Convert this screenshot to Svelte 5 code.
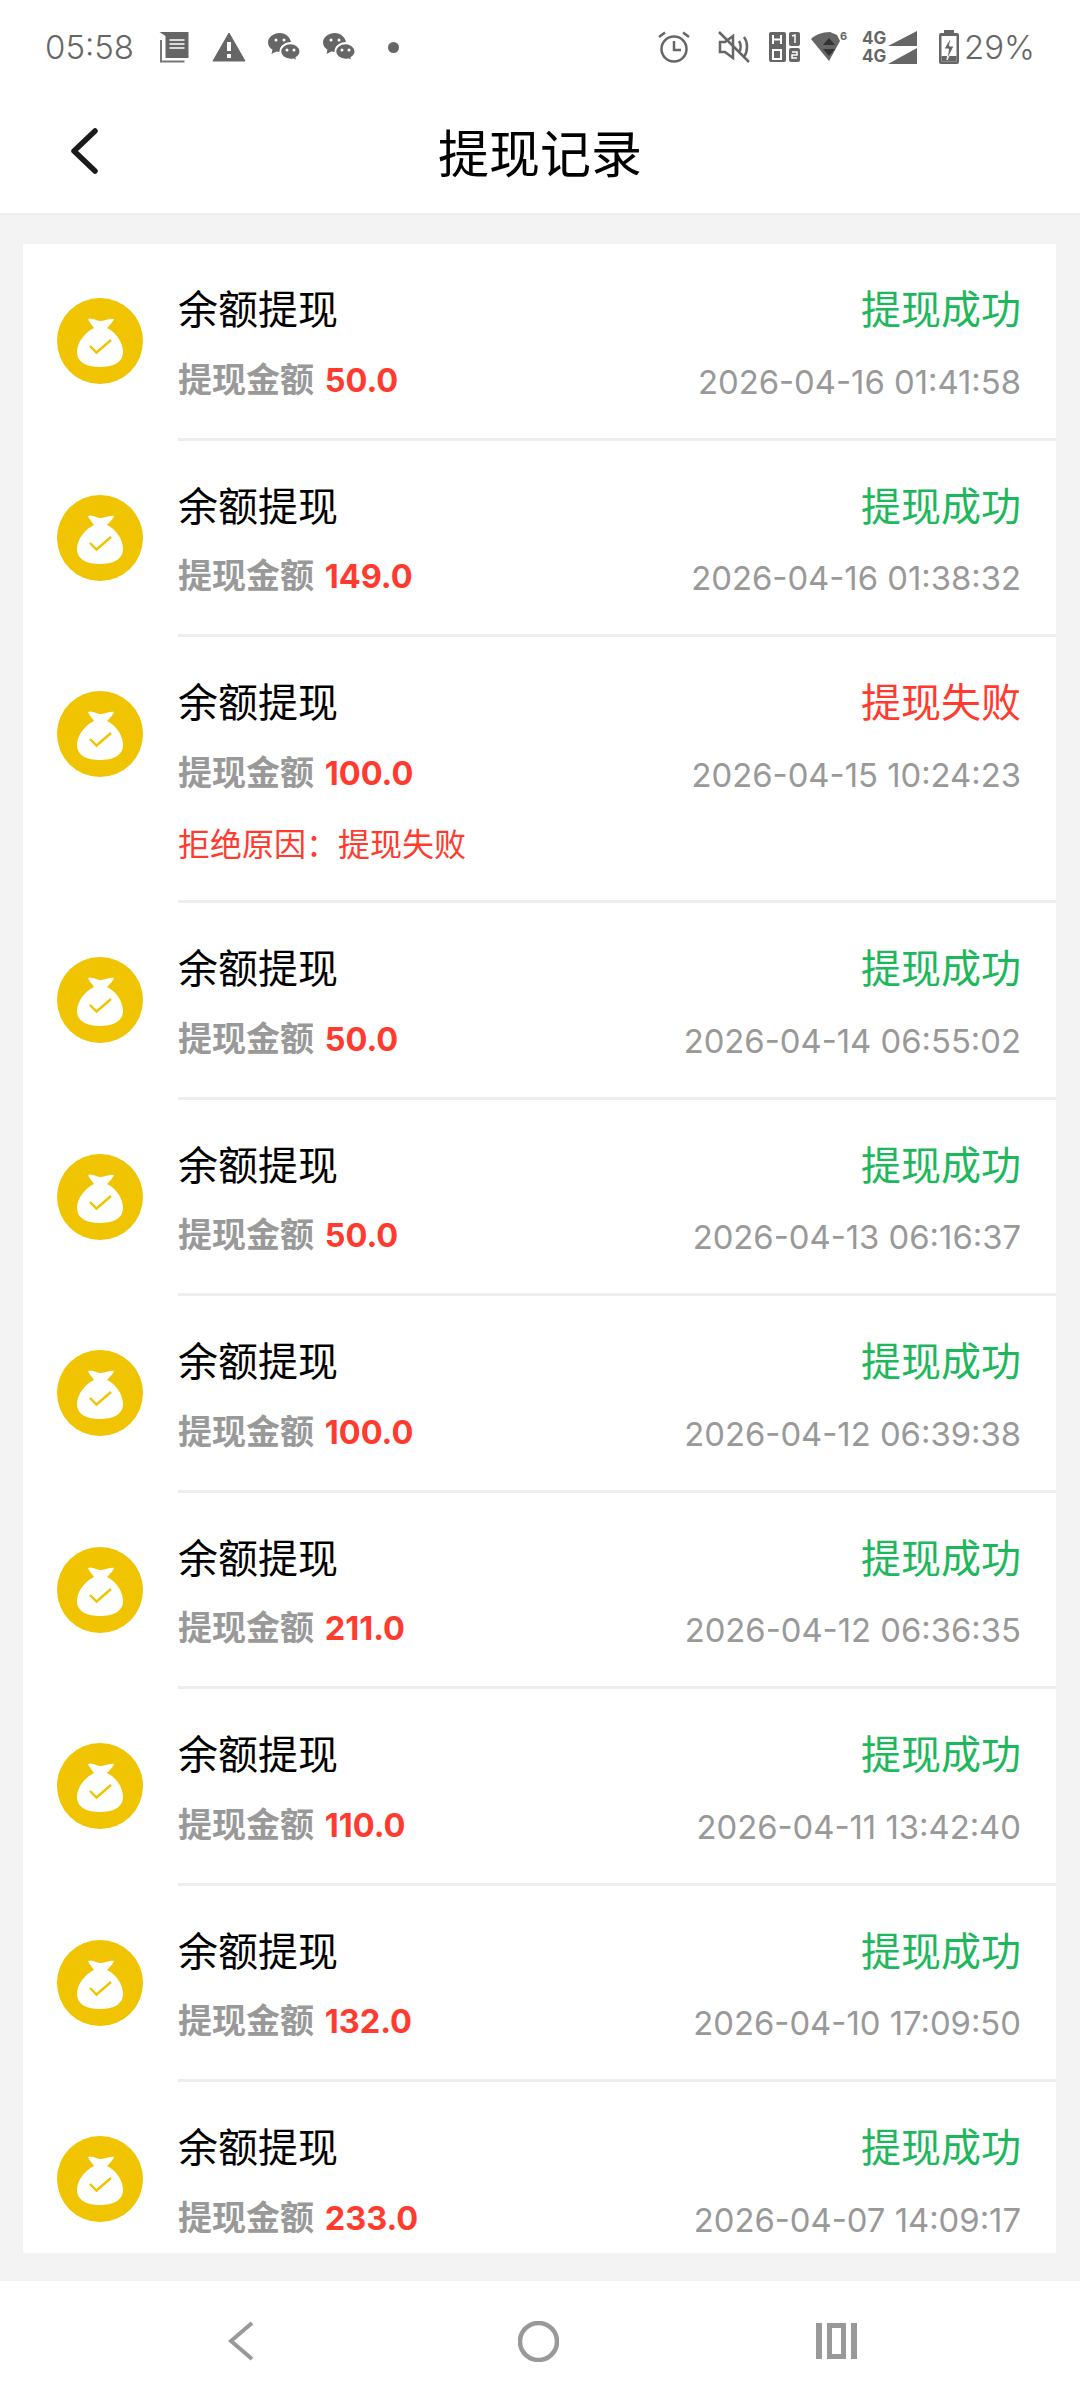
<script>
  const records = [
    { amount: '50.0', time: '2026-04-16 01:41:58' },
    { amount: '149.0', time: '2026-04-16 01:38:32' },
    { amount: '100.0', time: '2026-04-15 10:24:23', failed: true, reason: '拒绝原因：提现失败' },
    { amount: '50.0', time: '2026-04-14 06:55:02' },
    { amount: '50.0', time: '2026-04-13 06:16:37' },
    { amount: '100.0', time: '2026-04-12 06:39:38' },
    { amount: '211.0', time: '2026-04-12 06:36:35' },
    { amount: '110.0', time: '2026-04-11 13:42:40' },
    { amount: '132.0', time: '2026-04-10 17:09:50' },
    { amount: '233.0', time: '2026-04-07 14:09:17' }
  ];
</script>

{#snippet wechat()}
  <svg class="ic" width="34" height="32" viewBox="0 0 34 32">
    <path d="M13 2C6.500 2 1 6.300 1 11.500c0 3 1.800 5.600 4.500 7.300L4.500 23l5-2.500c1 .3 2 .4 3 .4 0-5.500 5-9.900 11.500-9.900C23 6 18.500 2 13 2z" fill="#666" />
    <path d="M23.500 12.500C18 12.500 13.500 16 13.500 20.500s4.500 8 10 8c1 0 2-.1 3-.4l3.500 2-.8-3.500c2.500-1.500 4-3.700 4-6.100 0-4.500-4.500-8-9.700-8z" fill="#666" stroke="#fff" stroke-width="1.500" />
    <circle cx="9" cy="9" r="1.500" fill="#fff" /><circle cx="17" cy="9" r="1.500" fill="#fff" />
    <circle cx="20" cy="19" r="1.500" fill="#fff" /><circle cx="27" cy="19" r="1.500" fill="#fff" />
  </svg>
{/snippet}

{#snippet bag()}
  <svg class="bag" width="86" height="86" viewBox="0 0 86 86">
    <circle cx="43" cy="43" r="43" fill="#f0c400" />
    <path d="M31 21C35 19 39 23 44 23C49 23 53 20 57 21C56 24 52 28 50 30C60 35 66 45 66 54C66 65 55 69 43 69C31 69 20 65 20 54C20 45 27 35 37 30C35 27 32 24 31 21Z" fill="#fff" />
    <path d="M33 48L39.500 54.500L54 42" fill="none" stroke="#f0c400" stroke-width="2.400" />
  </svg>
{/snippet}

<div class="page">
  <div class="status">
    <div class="status-left">
      <span class="clock">05:58</span>
      <svg class="ic" width="31" height="32" viewBox="0 0 30 32">
        <path d="M0 1H29V27H6V5z" fill="#666" />
        <path d="M10 9H25M10 13H25M10 17H25" stroke="#fff" stroke-width="1.500" />
        <path d="M1.500 9V30.500H25" fill="none" stroke="#777" stroke-width="2" />
      </svg>
      <svg class="warn" width="34" height="30" viewBox="0 0 33 30">
        <path d="M16.500 1L32.500 29H.5z" fill="#666" stroke="#666" stroke-linejoin="round" />
        <path d="M14.500 10H18.500V19H14.500zM14.500 22H18.500V26H14.500z" fill="#fff" />
      </svg>
      {@render wechat()}
      {@render wechat()}
      <span class="dot"></span>
    </div>
    <div class="status-right">
      <svg width="32" height="32" viewBox="0 0 32 32" fill="none" stroke="#666" stroke-width="2.500">
        <circle cx="16" cy="18" r="12.500" />
        <path d="M16 10V19H23M1 6L7 1.500M31 6L25 1.500" />
      </svg>
      <svg class="mute" width="33" height="32" viewBox="0 0 33 32" fill="none" stroke="#666" stroke-width="2.500">
        <path d="M2 11H7L15 5V27L7 21H2z" />
        <path d="M1 1L31 31M21 10C23 13 23 18 21 22M26 6C30 11 30 20 26 26" />
      </svg>
      <svg class="hd" width="31" height="32" viewBox="0 0 31 32">
        <rect x="0" y="1" width="17" height="30" rx="2" fill="#666" />
        <rect x="20" y="1" width="11" height="14" rx="2" fill="#666" />
        <rect x="20" y="17" width="11" height="14" rx="2" fill="#666" />
        <path d="M4 4V13M12 4V13M4 8.500H12M4 19H12V28H4z" fill="none" stroke="#fff" stroke-width="2" />
        <path d="M23 5L26 4V12M23 21H28V24H23V27H28" fill="none" stroke="#fff" stroke-width="1.500" />
      </svg>
      <svg class="wifi" width="37" height="40" viewBox="0 -8 37 40">
        <path d="M0 8C4 4 11 1 19 1L26 4L29 10L18 30z" fill="#666" />
        <path d="M12 14L18 7L24 14zM12 18H24L18 25z" fill="#333" />
        <text x="29" y="9" class="six">6</text>
      </svg>
      <div class="sim">
        <div class="sim-row"><span>4G</span><svg width="30" height="16" viewBox="0 0 30 16"><path d="M0 15L29 0V15z" fill="#666" /></svg></div>
        <div class="sim-row"><span>4G</span><svg width="30" height="17" viewBox="0 0 30 17"><path d="M0 16L29 0V16z" fill="#666" /></svg></div>
      </div>
      <svg class="batt" width="20" height="34" viewBox="0 0 20 34">
        <path d="M5 0H15V3H18Q20 3 20 5V32Q20 34 18 34H2Q0 34 0 32V5Q0 3 2 3H5z" fill="#666" />
        <rect x="2.500" y="6" width="15" height="25.500" fill="#fff" />
        <rect x="2.500" y="26" width="15" height="5.500" fill="#666" />
        <path d="M12 7L5 19H9.500L8 30L15 16H10.500z" fill="#666" stroke="#fff" />
      </svg>
      <span class="pct">29%</span>
    </div>
  </div>

  <header>
    <svg class="back" width="28" height="48" viewBox="0 0 28 48">
      <path d="M25 4L4 24L25 44" fill="none" stroke="#1a1a1a" stroke-width="5.500" stroke-linecap="round" stroke-linejoin="round" />
    </svg>
    <h1>提现记录</h1>
  </header>

  <main>
    <div class="card">
      {#each records as r}
        <div class="row">
          {@render bag()}
          <div class="body">
            <div class="line one">
              <span class="title">余额提现</span>
              <span class="state" class:failed={r.failed}>{r.failed ? '提现失败' : '提现成功'}</span>
            </div>
            <div class="line two">
              <span class="label">提现金额 <b>{r.amount}</b></span>
              <span class="time">{r.time}</span>
            </div>
            {#if r.reason}
              <div class="reason">{r.reason}</div>
            {/if}
          </div>
        </div>
      {/each}
    </div>
  </main>

  <nav>
    <svg width="26" height="40" viewBox="0 0 26 40"><path d="M24 2L3 20L24 38" fill="none" stroke="#999" stroke-width="4" /></svg>
    <svg class="home" width="41" height="41" viewBox="0 0 41 41"><circle cx="20.500" cy="20.500" r="18.500" fill="none" stroke="#999" stroke-width="4.500" /></svg>
    <svg width="41" height="36" viewBox="0 0 41 36" fill="none" stroke="#999"><path d="M3 0V36M38 0V36" stroke-width="6" /><rect x="13.500" y="2.500" width="14" height="31" stroke-width="5" /></svg>
  </nav>
</div>

<style>
  :global(body) {
    background: #f3f3f3;
    font-family: "Noto Sans CJK SC", sans-serif;
  }

  .page {
    display: flex;
    flex-direction: column;
    height: 2401px;
    overflow: hidden;
  }

  .status {
    align-items: center;
    background: #fff;
    color: #666;
    display: flex;
    height: 94px;
    justify-content: space-between;
    padding: 0 45px;
  }

  .status-left, .status-right { align-items: center; display: flex; }

  .status-left { gap: 21px; }

  .status-right { gap: 28px; }

  .clock, .pct {
    font-family: Inter, "Open Sans", sans-serif;
    font-size: 33px;
    font-weight: 300;
  }

  .clock { margin-right: 4px; }

  .warn { margin-left: 1px; }

  .dot {
    background: #666;
    border-radius: 50%;
    height: 11px;
    margin-left: 11px;
    width: 11px;
  }

  .six {
    fill: #666;
    font-family: Inter, sans-serif;
    font-size: 11px;
    font-weight: 700;
  }

  .mute { margin-right: -10px; }

  .hd { margin-right: -17px; }

  .wifi { margin: 0 -14px 8px 0; }

  .sim {
    color: #666;
    display: flex;
    flex-direction: column;
    font-family: Inter, sans-serif;
    font-size: 17px;
    font-weight: 700;
    gap: 1px;
    line-height: 17px;
    margin-right: -7px;
    width: 56px;
  }

  .sim-row { align-items: flex-end; display: flex; justify-content: space-between; }

  .batt { margin-right: -23px; }

  header {
    align-items: center;
    background: #fff;
    border-bottom: 2px solid #eeeeee;
    display: flex;
    height: 119px;
    justify-content: center;
    position: relative;
  }

  .back { left: 70px; position: absolute; top: 33px; }

  h1 {
    color: #000;
    font-size: 51px;
    font-weight: 400;
    margin: 0 0 6px 0;
  }

  main {
    flex: 1;
    min-height: 0;
    padding: 29px 24px 28px 23px;
  }

  .card {
    background: #fff;
    height: 100%;
    overflow: hidden;
  }

  .row {
    align-items: flex-start;
    display: flex;
    padding-left: 34px;
  }

  .bag { flex: none; margin: 54px 35px 0 0; }

  .body {
    border-bottom: 3px solid #eeeeee;
    box-sizing: border-box;
    flex: 1;
    min-height: 196.5px;
    padding: 33px 35px 0 0;
  }

  .line { align-items: center; display: flex; justify-content: space-between; }

  .one { height: 60px; }

  .two { height: 50px; margin-top: 15px; }

  .title, .state { font-size: 40px; }

  .title { color: #000; }

  .state { color: #1db85c; }

  .state.failed { color: #ff3b30; }

  .label {
    color: #999;
    font-size: 34px;
    font-weight: 700;
  }

  .label b {
    color: #ff3b30;
    font-family: Inter, sans-serif;
    font-size: 32.5px;
    font-weight: 700;
    margin-left: 3px;
  }

  .time {
    color: #999;
    font-family: Inter, sans-serif;
    font-size: 32.8px;
    margin-top: 9px;
  }

  .reason {
    color: #ff3b30;
    font-size: 32px;
    height: 82.3px;
    line-height: 48px;
    margin-top: 23px;
  }

  nav {
    align-items: center;
    background: #fff;
    display: flex;
    flex: none;
    height: 120px;
    justify-content: space-between;
    padding: 0 223px 0 228px;
  }

  .home { margin-left: 6px; }
</style>
